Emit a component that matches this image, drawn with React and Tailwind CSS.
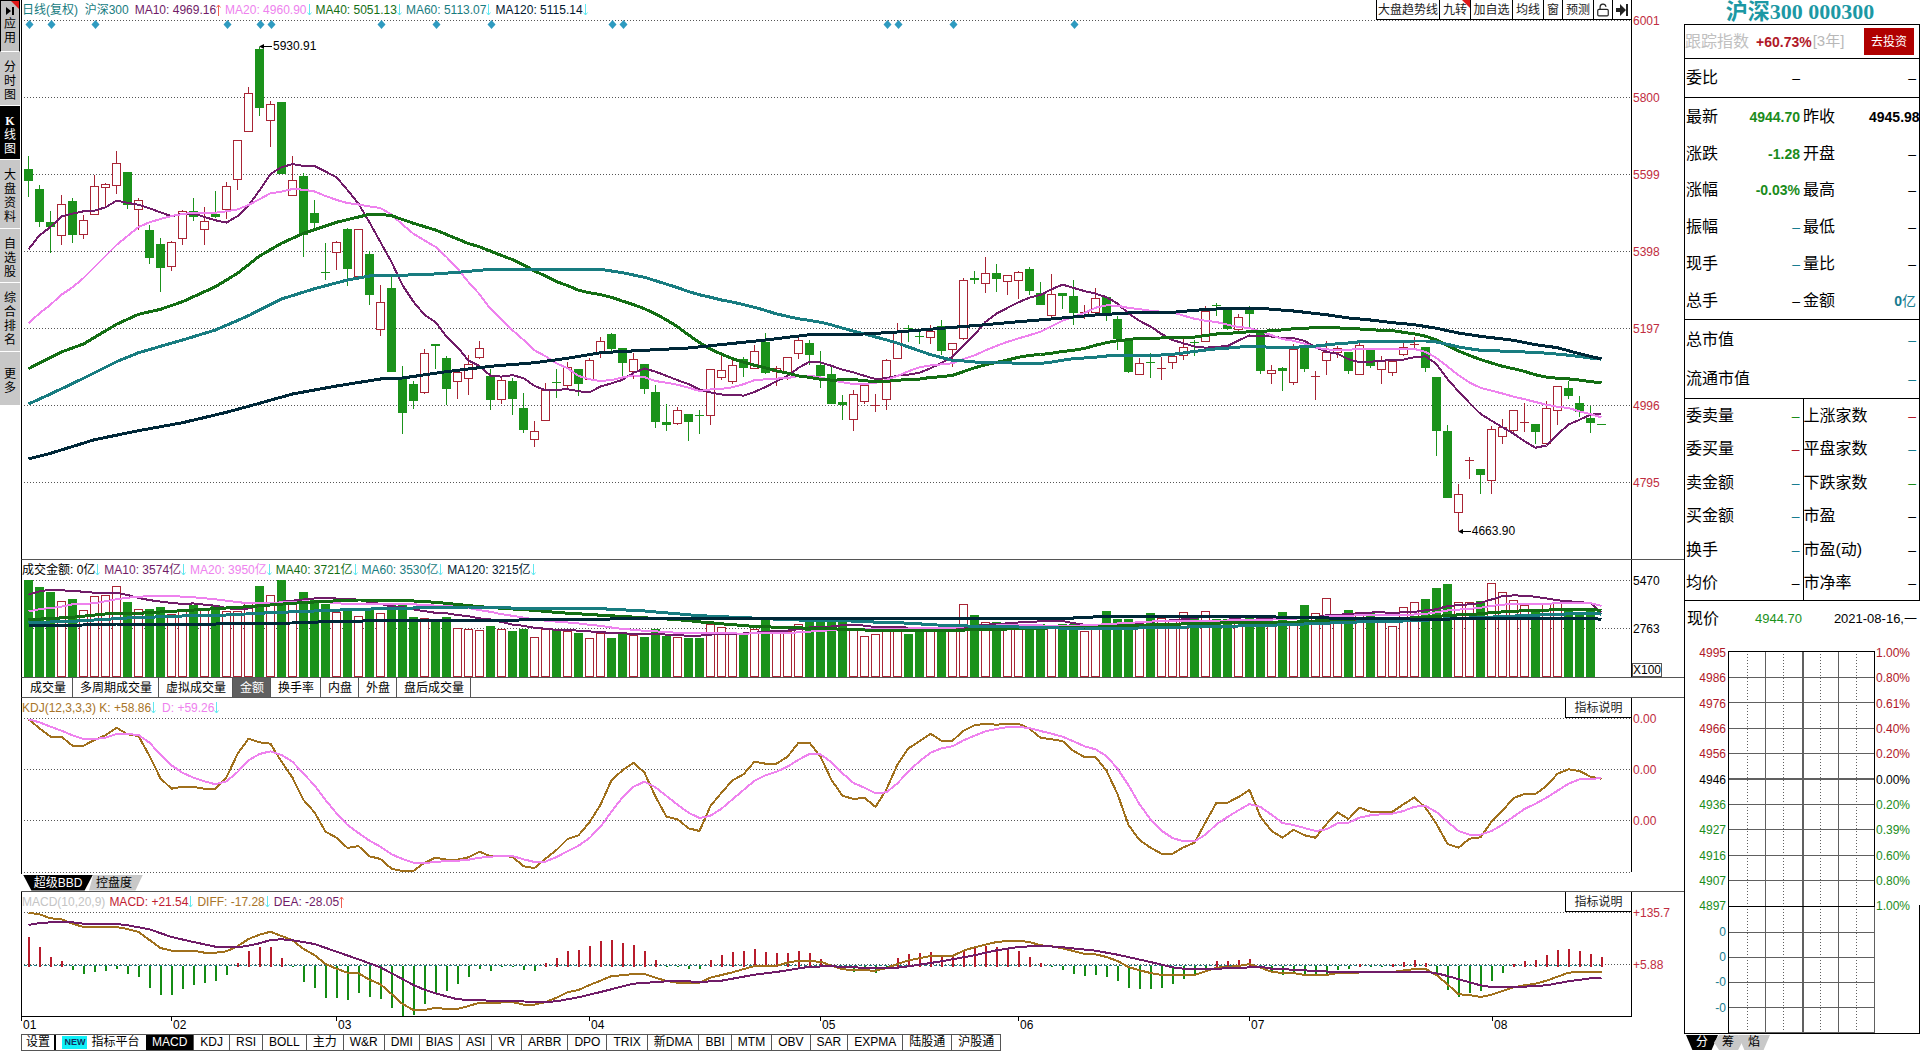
import { LockOpen } from "lucide-react";

const STEP = 11;
const cx = (i) => 6.5 + i * STEP;

// chart readings are stored in thirds of a pixel
// candle: colour, body top, body bottom, high, low
const candleBlocks = [
  {
    base: 0,
    rows: `g 508 542 468 591|g 567 665 556 681|g 666 681 632 759|r 613 704 585 735|g 603 704 595 729|r 661 701 645 716|r 559 641 525 644|r 552 560 548 620|r 490 556 453 582|g 516 616 516 626|r 601 626 593 690|g 690 773 675 792|g 732 803 714 876|r 727 797 723 812|r 634 713 630 735|g 633 650 595 663|r 664 686 621 735|g 641 650 573 655|r 559 626 546 656|r 421 536 421 570|r 280 392 261 396|g 147 323 140 347|r 313 361 303 440|g 306 521 306 521|r 541 584 468 585|g 528 705 519 771|g 639 668 600 685|g 815 818 730 840|r 727 757 722 810|g 687 806 684 858|r 688 829 688 841|g 762 884 753 914`,
  },
  {
    base: 600,
    rows: `r 307 386 255 408|g 264 515 230 515|g 535 638 498 702|g 552 602 543 627|r 460 577 447 581|g 433 437 433 507|g 474 566 468 615|r 516 544 516 597|r 493 533 465 585|r 445 472 423 478|g 529 599 507 630|r 541 596 530 612|g 543 596 534 645|g 625 689 580 699|r 694 716 663 741|r 570 659 549 659|g 547 550 507 594|r 500 556 486 570|g 507 551 507 588|r 481 536 474 540|r 424 457 411 474|g 402 447 399 455|g 444 488 444 531|r 478 514 459 537|g 492 566 492 582|g 576 665 556 684|g 667 675 612 692|r 631 668 621 675|g 642 665 642 723|g 645 648 630 702|r 508 644 508 675|r 511 530 468 540|r 496 542 480 552|g 477 503 471 531|r 454 503 435 508|g 426 518 399 523|r 505 514 498 558|r 472 520 472 540|r 421 458 414 477|g 429 464 420 495|g 495 529 453 564|g 522 612 500 612|g 606 614 585 660|r 583 656 570 693|r 556 602 550 612|r 615 618 582 636|r 481 596 477 630|r 397 473 369 473|g 384 387 375 426|g 407 411 390 432|r 394 412 375 432|g 379 453 360 465|r 430 446 430 500|r 241 415 235 421|g 235 239 213 252|r 220 248 171 279|g 219 237 192 276|r 226 242 226 285|r 217 239 213 297|g 207 272 201 285|g 279 315 246 315|r 283 344 222 351|g 279 288 279 327|g 288 339 240 375|r 336 345 315 357|r 295 335 264 348|g 291 345 291 363|g 357 416 348 450|g 423 516 423 519|r 490 521 474 521|g 486 489 459 534|r 505 508 471 540|r 468 486 465 507|r 440 466 416 480|g 426 430 420 468|r 333 422 318 426|g 315 319 309 348`,
  },
  {
    base: 720,
    rows: `g 202 267 202 270|r 232 268 223 272|g 208 221 198 260|g 276 393 276 401|r 391 400 375 432|g 384 393 381 453|r 328 425 312 435|g 315 387 315 396|r 409 412 393 480|r 336 361 303 405|r 325 335 318 354|g 336 392 336 402|r 314 402 310 405|g 330 377 330 384|r 362 388 348 432|r 364 395 360 408|r 322 343 308 348|r 313 316 291 325|g 321 383 321 396|g 411 572 411 648|g 573 773 555 773|r 763 815 732 873|r 660 663 651 717|g 687 704 687 762|r 566 721 558 762|r 562 589 537 612|r 511 569 511 580|r 546 549 489 576|g 552 575 552 612|r 505 610 483 616|r 439 511 439 555|g 444 468 423 476|g 489 517 468 530|g 534 549 498 579|g 552 555 552 555`,
  },
];

const candles = candleBlocks.flatMap(({ base, rows }) =>
  rows.split("|").map((row) => {
    const [color, ...v] = row.split(" ");
    const [top, bottom, high, low] = v.map((n) => Number(n) + base);
    return { up: color === "r", top, bottom, high, low };
  })
);

const closes = candles.map((c) => (c.up ? c.top : c.bottom));

const volumes = [
  91, 112, 126, 154, 147, 181, 139, 136, 109, 156, 178, 178, 171, 193, 178, 165, 178, 165, 184, 184, 160, 108, 136, 91,
  150, 126, 150, 162, 187, 184, 199, 180, 190, 165, 165, 200, 203, 210, 202, 235, 237, 241, 228, 238, 243, 237, 262, 237,
  238, 243, 250, 265, 250, 265, 250, 256, 262, 238, 258, 262, 264, 264, 223, 232, 250, 252, 237, 208, 245, 243, 222, 213,
  213, 212, 212, 240, 259, 253, 240, 238, 252, 240, 240, 237, 225, 163, 195, 215, 215, 220, 225, 222, 222, 235, 222, 222,
  244, 225, 183, 207, 207, 220, 190, 205, 210, 187, 205, 184, 208, 208, 212, 205, 210, 222, 186, 215, 165, 190, 145, 200,
  180, 185, 190, 205, 229, 172, 157, 147, 114, 102, 156, 156, 153, 100, 127, 151, 166, 180, 160, 160, 182, 185, 182, 381,
];

const kLine = [
  508, 535, 560, 560, 587, 587, 570, 556, 533, 553, 558, 618, 685, 716, 710, 711, 716, 716, 682, 612, 566, 577, 581, 635,
  683, 750, 787, 845, 863, 894, 888, 919, 927, 956, 963, 963, 938, 923, 929, 929, 922, 905, 919, 918, 920, 949, 954, 926,
  900, 867, 856, 817, 764, 691, 661, 638, 668, 740, 800, 808, 835, 843, 768, 728, 691, 673, 635, 641, 641, 620, 578, 578,
  620, 690, 737, 747, 743, 771, 718, 643, 595, 574, 551, 572, 572, 542, 526, 521, 524, 521, 521, 536, 563, 568, 573, 603,
  621, 621, 662, 732, 825, 870, 893, 911, 911, 892, 878, 817, 758, 758, 741, 720, 800, 843, 863, 839, 856, 863, 822, 787,
  807, 773, 785, 785, 785, 763, 742, 773, 822, 882, 893, 866, 862, 815, 782, 744, 732, 732, 708, 671, 658, 663, 680, 686,
];

const dLine = [
  508, 517, 530, 542, 556, 567, 567, 563, 552, 552, 555, 578, 614, 646, 668, 683, 694, 703, 694, 666, 631, 612, 604, 615,
  635, 671, 706, 750, 790, 825, 849, 872, 890, 913, 927, 938, 939, 936, 933, 932, 929, 923, 920, 918, 918, 928, 936, 935,
  921, 904, 887, 864, 830, 785, 742, 710, 695, 712, 738, 764, 788, 804, 797, 776, 748, 720, 692, 676, 665, 650, 629, 612,
  613, 637, 670, 699, 713, 730, 727, 700, 664, 634, 608, 595, 589, 571, 557, 544, 537, 531, 531, 534, 543, 551, 560, 574,
  589, 598, 618, 656, 706, 763, 808, 842, 864, 874, 874, 854, 823, 801, 781, 762, 771, 794, 819, 825, 834, 843, 838, 820,
  818, 803, 796, 793, 791, 783, 770, 768, 786, 815, 843, 854, 854, 843, 824, 800, 777, 761, 743, 722, 701, 688, 686, 685,
];

const macdBars = [
  231, 262, 291, 303, 329, 341, 336, 333, 326, 342, 350, 384, 405, 405, 387, 375, 369, 362, 345, 310, 274, 262, 262, 294,
  322, 366, 384, 413, 413, 419, 399, 411, 416, 443, 467, 465, 431, 402, 393, 372, 350, 326, 332, 318, 318, 329, 332, 309,
  294, 274, 270, 258, 243, 240, 249, 255, 274, 300, 318, 321, 326, 326, 300, 285, 276, 273, 267, 276, 279, 279, 273, 279,
  298, 322, 329, 336, 332, 338, 325, 294, 282, 279, 276, 290, 290, 272, 262, 257, 262, 268, 273, 291, 309, 318, 330, 342,
  348, 346, 351, 363, 384, 387, 387, 384, 372, 357, 345, 325, 303, 303, 301, 297, 325, 338, 345, 340, 345, 345, 345, 330,
  327, 312, 318, 318, 312, 306, 300, 309, 338, 390, 410, 399, 393, 363, 339, 312, 303, 300, 285, 270, 267, 273, 282, 291,
];

// "index:value" pairs
const pairs = (text) => text.split(" ").map((p) => p.split(":").map(Number));
const series = (values) => values.map((v, i) => [i, v]);

// moving average, with the part before the first full window given by hand
const average = (values, n, lead) => [
  ...pairs(lead),
  ...values
    .map((_, i) => [i, values.slice(i - n + 1, i + 1).reduce((a, b) => a + b, 0) / n])
    .slice(n - 1),
];

const MA10 = "#701c68";
const MA20 = "#ee82ee";
const MA40 = "#146e14";
const MA60 = "#187c80";
const MA120 = "#002838";
const GREEN = "#1b921b";
const RED = "#a82434";
const GOLD = "#a0701c";

const priceLines = [
  { color: MA10, width: 2, points: average(closes, 10, "0:748 1:706 2:681 3:649 4:641 5:634 6:632 7:622 8:602") },
  {
    color: MA20,
    width: 2,
    points: average(closes, 20, "0:970 1:940 2:914 3:884 4:862 5:834 6:801 7:768 8:735 9:708 10:681 11:667 12:657 13:648 14:642 15:638 16:638 17:638 18:634"),
  },
  {
    color: MA40,
    width: 3,
    points: average(closes, 40, "0:1106 3:1056 5:1032 8:973 10:943 12:928 14:905 17:860 19:820 21:768 23:730 25:700 28:667 31:643 32:643 33:647 35:670 37:690"),
  },
  {
    color: MA60,
    width: 3,
    points: average(closes, 60, "0:1212 2:1182 5:1135 8:1085 10:1058 14:1020 17:990 20:947 23:897 26:866 29:840 31:828 33:826 36:824 39:817 42:808 52:808 54:818 56:832"),
  },
  {
    color: MA120,
    width: 3,
    points: pairs("0:1377 2:1360 6:1319 10:1292 14:1268 18:1237 21:1210 24:1182 28:1158 32:1137 34:1134 38:1115 42:1099 46:1088 49:1075 52:1058 56:1051 60:1044 62:1037 67:1020 71:1004 76:1002 79:996 83:985 87:974 90:965 93:957 97:945 101:937 104:937 106:931 109:925 112:925 115:933 118:944 120:954 122:960 124:968 126:974 128:985 130:999 132:1009 135:1021 137:1034 139:1043 141:1061 143:1077"),
  },
];

const volumeLines = [
  { color: MA10, width: 2, points: average(volumes, 10, "0:134 1:124 2:119 3:121 4:123 5:125 6:128 7:128 8:128") },
  { color: MA20, width: 2, points: average(volumes, 20, "0:184 1:178 3:170 4:163 6:160 8:148 9:143 11:138 13:138 15:142 17:148") },
  { color: MA40, width: 3, points: average(volumes, 40, "0:209 4:202 7:192 10:190 14:182 18:174 20:170 24:160 27:154 30:150 34:151 37:157") },
  { color: MA60, width: 3, points: average(volumes, 60, "0:218 4:214 9:204 14:198 18:195 22:188 26:183 30:178 35:174 40:171 45:175 52:176 56:183") },
  { color: MA120, width: 3, points: pairs("0:226 4:226 8:222 17:222 20:220 24:219 28:214 36:211 44:211 46:208 60:206 72:205 95:204 98:199 112:199 114:202 120:205 128:208 132:205 142:205 143:208") },
];

const kdjLines = [
  { color: GOLD, width: 2, points: series(kLine) },
  { color: MA20, width: 2, points: series(dLine) },
];

const macdLines = [
  {
    color: GOLD,
    width: 2,
    points: pairs("0:158 1:163 2:175 3:178 4:191 5:201 8:201 9:207 10:216 11:240 12:264 13:272 15:272 16:278 17:278 18:274 19:259 20:237 21:224 22:215 23:228 24:241 25:267 26:285 27:312 28:326 29:338 30:340 31:359 32:373 33:402 34:432 35:450 36:450 37:443 38:447 39:447 40:438 41:428 42:429 44:426 45:434 46:434 47:426 48:413 49:397 50:390 51:375 52:362 53:348 54:346 55:342 56:342 57:353 58:363 59:368 61:368 62:353 64:337 66:318 68:317 69:308 70:302 72:305 73:317 74:328 75:330 77:332 78:324 79:312 80:301 81:295 82:288 84:288 85:272 86:262 87:254 88:246 89:243 90:242 91:246 92:256 93:259 94:265 95:273 96:282 97:283 98:291 99:303 100:321 101:331 102:339 103:345 106:345 107:334 108:323 110:318 111:312 112:323 113:335 114:339 115:339 116:345 118:345 119:339 123:336 124:336 126:327 127:327 128:345 129:373 130:403 131:405 132:411 133:404 134:393 135:382 136:376 137:371 138:362 139:350 140:338 141:336 143:336"),
  },
  {
    color: MA10,
    width: 2,
    points: pairs("0:195 1:189 3:185 4:187 5:191 8:192 9:196 11:208 13:231 15:246 17:260 19:262 20:257 21:250 22:240 23:238 24:241 26:252 28:275 30:298 32:322 33:340 34:357 35:375 36:389 37:400 39:418 42:422 47:426 48:424 50:412 52:396 55:371 58:364 59:362 61:366 63:362 66:344 68:336 71:320 73:319 75:322 77:325 79:323 80:319 83:304 86:286 88:271 90:261 92:257 94:262 97:272 99:284 102:306 104:322 105:326 108:326 110:324 112:320 113:326 115:329 117:333 119:336 125:335 127:335 128:340 129:348 131:367 132:376 133:381 135:382 138:376 140:364 142:355 143:353"),
  },
];

const events = [0, 2, 6, 18, 21, 22, 32, 37, 42, 53, 54, 78, 79, 84, 95];

function Lines({ lines }) {
  return lines.map((line, i) => (
    <polyline
      key={i}
      fill="none"
      stroke={line.color}
      strokeWidth={line.width}
      strokeLinejoin="round"
      points={line.points.map(([x, y]) => `${cx(x)},${(y / 3).toFixed(1)}`).join(" ")}
    />
  ));
}

function GridLines({ rows }) {
  return rows.map((y) => <line key={y} x1="2" x2="1609" y1={y} y2={y} stroke="#555" strokeDasharray="1 2" />);
}

function Bar({ x, top, bottom, up }) {
  const y = Math.round(top / 3);
  const h = Math.max(1, Math.round(bottom / 3) - y);
  if (up && h > 1) {
    return <rect x={x - 4} y={y + 0.5} width="8" height={h} fill="#fff" stroke={RED} />;
  }
  return <rect x={x - 4.5} y={y} width="9" height={h} fill={up ? RED : GREEN} />;
}

function PriceChart() {
  return (
    <svg className="block w-full h-[539px]" viewBox="0 20 1609 539" preserveAspectRatio="none" shapeRendering="crispEdges">
      <GridLines rows={[20.5, 97.5, 174.5, 251.5, 328.5, 405.5, 482.5]} />
      {candles.map((c, i) => (
        <g key={i}>
          <line x1={cx(i)} x2={cx(i)} y1={Math.round(c.high / 3)} y2={Math.round(c.low / 3)} stroke={c.up ? RED : GREEN} />
          <Bar x={cx(i)} top={c.top} bottom={c.bottom} up={c.up} />
        </g>
      ))}
      <Lines lines={priceLines} />
      {events.map((i) => (
        <path key={i} d={`M${cx(i) + 1} 20l4 4.5l-4 4.5l-4 -4.5z`} fill="#2f9bc0" shapeRendering="auto" />
      ))}
      <path d="M239 46.5h11M1437 531.5h12" stroke="#000" />
      <path d="M237 46.5l5 -2.5v5zM1436 531.5l5 -2.5v5z" fill="#000" shapeRendering="auto" />
    </svg>
  );
}

function VolumeChart() {
  return (
    <svg className="block w-full h-[97px]" viewBox="0 30 1609 97" preserveAspectRatio="none" shapeRendering="crispEdges">
      <GridLines rows={[30.5, 78.5]} />
      {volumes.slice(0, -1).map((v, i) => (
        <Bar key={i} x={cx(i)} top={v} bottom={candles[i].up ? 378 : 381} up={candles[i].up} />
      ))}
      <Lines lines={volumeLines} />
    </svg>
  );
}

function KdjChart() {
  return (
    <svg className="block w-full h-[156px]" viewBox="0 168 1609 156" preserveAspectRatio="none" shapeRendering="crispEdges">
      <GridLines rows={[168.5, 219.5, 270.5, 322.5]} />
      <Lines lines={kdjLines} />
    </svg>
  );
}

function MacdChart() {
  return (
    <svg className="block w-full h-[104px]" viewBox="0 52 1609 104" preserveAspectRatio="none" shapeRendering="crispEdges">
      <GridLines rows={[52.5, 104.5]} />
      <line x1="2" x2="1580" y1="105.5" y2="105.5" stroke="#187c80" strokeDasharray="3 2" />
      {macdBars.map((v, i) => {
        const up = v < 318;
        return <rect key={i} x={cx(i) - 1} y={up ? v / 3 : 106} width="2" height={Math.max(1, up ? 106.5 - v / 3 : v / 3 - 106)} fill={up ? "#b81c2c" : "#148c14"} />;
      })}
      <Lines lines={macdLines} />
    </svg>
  );
}

function Arrow({ up }) {
  return (
    <svg className={up ? "w-[5px] h-3 rotate-180" : "w-[5px] h-3"} viewBox="0 0 5 12" fill="none" stroke={up ? "#f06050" : "#60e8f0"}>
      <path d="M2.5 0v11M0.5 8.5l2 2.5l2 -2.5" />
    </svg>
  );
}

function Legend({ items }) {
  return (
    <div className="flex h-5 items-center gap-1 whitespace-nowrap">
      {items.map(([text, color, arrow]) => (
        <span key={text} className={`flex items-center ${color}`}>
          {text}
          {arrow && <Arrow up={arrow === "up"} />}
        </span>
      ))}
    </div>
  );
}

function HelpButton() {
  return <button className="absolute top-0 right-0 h-5 w-[66px] border-l border-b border-black bg-white text-[#222]">指标说明</button>;
}

const navItems = [
  ["应用", "h-[52px] bg-[#c0c0c0] border border-black text-black"],
  ["分时图", "h-[54px] pt-1 bg-[#c8c8c8] text-black"],
  ["K线图", "h-[54px] pt-1 bg-black text-white"],
  ["大盘资料", "h-[69px] pt-1 bg-[#c8c8c8] text-black"],
  ["自选股", "h-[54px] pt-1 bg-[#c8c8c8] text-black"],
  ["综合排名", "h-[69px] pt-1 bg-[#c8c8c8] text-black"],
  ["更多", "h-[54px] pt-1 bg-[#c8c8c8] text-black"],
];

function SideNav() {
  return (
    <nav className="w-[21px] shrink-0">
      {navItems.map(([label, look], i) => (
        <button key={label} className={`relative flex w-5 flex-col items-center justify-center border-b border-b-white leading-[14px] ${look}`}>
          {i === 0 && (
            <>
              <svg className="mb-0.5 h-2 w-2" viewBox="0 0 8 8"><path d="M0 0l5 4l-5 4zM6 0h2v8h-2z" /></svg>
              <svg className="absolute top-0 right-0 h-2 w-2" viewBox="0 0 8 8"><path d="M0 0h8v8z" fill="#e01818" /></svg>
            </>
          )}
          {[...label].map((ch) => (
            <span key={ch} className={ch === "K" ? "font-['Liberation_Serif',serif] font-bold" : ""}>{ch}</span>
          ))}
        </button>
      ))}
    </nav>
  );
}

function Toolbar() {
  const tool = "flex h-5 items-center justify-center border-r border-b border-black bg-white text-[#222]";
  return (
    <div className="absolute top-0 right-0 flex h-5 whitespace-nowrap">
      <button className={`${tool} w-16 border-l`}>大盘趋势线</button>
      <button className={`${tool} relative w-[31px]`}>
        九转
        <svg className="absolute top-0 right-0 h-2 w-2" viewBox="0 0 8 8"><path d="M0 0h8v8z" fill="#e01818" /></svg>
      </button>
      <button className={`${tool} w-[42px]`}>加自选</button>
      <button className={`${tool} w-[31px]`}>均线</button>
      <button className={`${tool} w-[19px]`}>窗</button>
      <button className={`${tool} w-[31px]`}>预测</button>
      <button className={`${tool} w-[19px]`} aria-label="锁定"><LockOpen className="h-3.5 w-3.5" strokeWidth={2} /></button>
      <button className={`${tool} w-[18px] border-r-0`} aria-label="收起">
        <svg className="h-3 w-3" viewBox="0 0 12 12" fill="#222"><path d="M0 4h4v-4l6 6l-6 6v-4h-4zM10 0h2v12h-2z" /></svg>
      </button>
    </div>
  );
}

function TabRow({ tabs, active, activeClass, padding }) {
  return tabs.map((tab) => (
    <button key={tab} className={`border-r border-[#555] ${padding} ${tab === active ? activeClass : ""}`}>{tab}</button>
  ));
}

const volumeTabs = ["成交量", "多周期成交量", "虚拟成交量", "金额", "换手率", "内盘", "外盘", "盘后成交量"];
const indicatorTabs = ["MACD", "KDJ", "RSI", "BOLL", "主力", "W&R", "DMI", "BIAS", "ASI", "VR", "ARBR", "DPO", "TRIX", "新DMA", "BBI", "MTM", "OBV", "SAR", "EXPMA", "陆股通", "沪股通"];

function Charts() {
  const axis = "w-[53px] shrink-0 border-l border-black pl-px leading-4 text-[#c02c40]";
  return (
    <main className="min-w-0 flex-1">
      <section className="flex border-b border-l border-b-[#555] border-l-black">
        <div className="relative min-w-0 flex-1">
          <Legend
            items={[
              ["日线(复权)\u00a0\u00a0沪深300", "text-[#187c80]"],
              ["MA10: 4969.16", "ml-0.5 text-[#701c68]", "up"],
              ["MA20: 4960.90", "text-[#ee82ee]", "down"],
              ["MA40: 5051.13", "text-[#146e14]", "down"],
              ["MA60: 5113.07", "text-[#187c80]", "down"],
              ["MA120: 5115.14", "text-[#001830]", "down"],
            ]}
          />
          <PriceChart />
          <Toolbar />
          <span className="absolute top-[38px] left-[15.6%] leading-4">5930.91</span>
          <span className="absolute top-[523px] left-[90.1%] leading-4">4663.90</span>
        </div>
        <div className={`${axis} pt-[13px]`}>
          {[6001, 5800, 5599, 5398, 5197, 4996, 4795].map((p) => (
            <div key={p} className="h-[77px]">{p}</div>
          ))}
        </div>
      </section>

      <section className="flex border-b border-l border-b-[#555] border-l-black">
        <div className="min-w-0 flex-1">
          <Legend
            items={[
              ["成交金额: 0亿", "text-black", "down"],
              ["MA10: 3574亿", "text-[#701c68]", "down"],
              ["MA20: 3950亿", "text-[#ee82ee]", "down"],
              ["MA40: 3721亿", "text-[#146e14]", "down"],
              ["MA60: 3530亿", "text-[#187c80]", "down"],
              ["MA120: 3215亿", "text-[#001830]", "down"],
            ]}
          />
          <VolumeChart />
        </div>
        <div className="flex w-[53px] shrink-0 flex-col border-l border-black pt-[13px] leading-4">
          <div className="h-12 pl-px">5470</div>
          <div className="pl-px">2763</div>
          <div className="mt-auto w-[30px] border border-[#555] text-center leading-3">X100</div>
        </div>
      </section>

      <div className="flex h-5 border-b border-l border-b-[#555] border-l-black pl-px">
        <TabRow tabs={volumeTabs} active="金额" activeClass="bg-[#606060] text-white" padding="pl-[7px] pr-1.5" />
      </div>

      <section className="flex h-[176px] border-l border-black">
        <div className="relative min-w-0 flex-1">
          <Legend
            items={[
              ["KDJ(12,3,3,3) K: +58.86", "text-[#a87428]", "down"],
              ["D: +59.26", "ml-0.5 text-[#ee82ee]", "down"],
            ]}
          />
          <KdjChart />
          <HelpButton />
        </div>
        <div className={`${axis} h-[174px] pt-[13px]`}>
          {[1, 2, 3].map((n) => (
            <div key={n} className="h-[51px]">0.00</div>
          ))}
        </div>
      </section>

      <div className="flex h-[18px] items-center border-b border-[#555] pl-0.5">
        <button className="h-4 w-[70px] bg-black text-white leading-4 [clip-path:polygon(0_0,100%_0,88%_100%,12%_100%)]">超级BBD</button>
        <button className="-ml-1 h-4 w-[54px] bg-[#c8c8c8] pr-1 leading-4 [clip-path:polygon(8%_0,100%_0,86%_100%,0_100%)]">控盘度</button>
      </div>

      <section className="flex border-l border-black">
        <div className="relative min-w-0 flex-1 border-b border-black">
          <Legend
            items={[
              ["MACD(10,20,9)", "text-[#c4c4c4]"],
              ["MACD: +21.54", "text-[#c01c30]", "down"],
              ["DIFF: -17.28", "text-[#a87428]", "down"],
              ["DEA: -28.05", "text-[#701c68]", "up"],
            ]}
          />
          <MacdChart />
          <HelpButton />
        </div>
        <div className={`${axis} pt-[13px]`}>
          <div className="h-[52px]">+135.7</div>
          <div>+5.88</div>
        </div>
      </section>

      <div className="mr-[53px] grid h-[17px] grid-cols-[150fr_165fr_253fr_231fr_198fr_231fr_243fr_139fr] leading-4">
        {["01", "02", "03", "04", "05", "06", "07", "08"].map((m) => (
          <div key={m} className="flex gap-px"><span className="h-1 w-px bg-black" />{m}</div>
        ))}
      </div>

      <div className="flex h-[17px] whitespace-nowrap border-y border-l border-[#555] w-fit leading-[15px]">
        <button className="w-[34px] border-r-2 border-black text-center">设置</button>
        <button className="flex w-[90px] items-center justify-center gap-1">
          <span className="bg-[#10f0f8] px-0.5 text-[9px] leading-[13px] font-bold text-[#103060]">NEW</span>
          指标平台
        </button>
        <TabRow tabs={indicatorTabs} active="MACD" activeClass="bg-black text-white" padding="px-1.5" />
      </div>
    </main>
  );
}

const tone = { k: "text-black", g: "text-[#1b8c1b]", r: "text-[#b01828]", b: "text-[#187c90]" };

function QuoteTable({ rows, className, split }) {
  return (
    <table className={`w-full table-fixed border-t border-r border-black text-base leading-5 ${className}`}>
      <tbody>
        {rows.map(([label, value, color, label2, value2, color2]) => (
          <tr key={label}>
            <th scope="row" className="w-[52px] p-0 pl-px text-left font-normal whitespace-nowrap">{label}</th>
            <td className={`w-[66px] p-0 pr-[3px] text-right text-sm font-bold ${tone[color]}`}>
              {value === "–" ? <span className="font-normal">–</span> : value}
            </td>
            <th scope="row" className={`w-[66px] p-0 text-left font-normal whitespace-nowrap ${split ? "border-l border-black" : ""}`}>{label2}</th>
            <td className={`p-0 pr-[3px] text-right text-sm ${tone[color2]}`}>{value2}</td>
          </tr>
        ))}
      </tbody>
    </table>
  );
}

const gridRows = [
  ["4995", "1.00%", "r"],
  ["4986", "0.80%", "r"],
  ["4976", "0.61%", "r"],
  ["4966", "0.40%", "r"],
  ["4956", "0.20%", "r"],
  ["4946", "0.00%", "k"],
  ["4936", "0.20%", "g"],
  ["4927", "0.39%", "g"],
  ["4916", "0.60%", "g"],
  ["4907", "0.80%", "g"],
  ["4897", "1.00%", "g"],
  ["0", "", "b"],
  ["0", "", "b"],
  ["-0", "", "b"],
  ["-0", "", "b"],
];

function MinuteGrid() {
  return (
    <svg className="mt-[7px] block h-[382px] w-[147px] shrink-0" viewBox="0 0 147 382" shapeRendering="crispEdges" stroke="#606060">
      {[26, 51, 77, 102, 153, 178, 204, 229, 281, 306, 331, 356].map((y) => (
        <line key={y} x1="0" x2="147" y1={y + 0.5} y2={y + 0.5} />
      ))}
      {[19.5, 55.5, 92.5, 128.5].map((x) => (
        <line key={x} x1={x} x2={x} y1="0" y2="382" strokeDasharray="1 2" />
      ))}
      <path d="M37.5 0v382M110.5 0v382M146.5 0v382M0 381.5h147" />
      <path d="M75 0v382M0 128h147" strokeWidth="2" />
      <path d="M0 0.5h147M0.5 0v382M146.5 0v255M0 255.5h147" stroke="#000" />
    </svg>
  );
}

function QuotePanel() {
  return (
    <aside className="w-[236px] shrink-0">
      <h1 className="h-6 pr-1 text-center font-['Liberation_Serif','Noto_Sans_CJK_SC',serif] text-[22px] leading-6 font-bold text-[#1c98a4]">沪深300 000300</h1>
      <div className="border-b border-l border-black">
        <div className="flex h-[34px] items-center border-t border-r border-black text-base">
          <span className="text-[#c0c0c0]">跟踪指数</span>
          <span className="ml-[7px] text-sm font-bold text-[#b01828]">+60.73%</span>
          <span className="ml-px text-[15px] text-[#b8b8b8]">[3年]</span>
          <button className="mr-[5px] ml-auto h-[27px] w-[50px] bg-[#b00000] text-xs text-white">去投资</button>
        </div>
        <QuoteTable className="h-[39px]" rows={[["委比", "–", "k", "", "–", "k"]]} />
        <QuoteTable
          className="h-[222px]"
          rows={[
            ["最新", "4944.70", "g", "昨收", <b>4945.98</b>, "k"],
            ["涨跌", "-1.28", "g", "开盘", "–", "k"],
            ["涨幅", "-0.03%", "g", "最高", "–", "k"],
            ["振幅", "–", "b", "最低", "–", "k"],
            ["现手", "–", "b", "量比", "–", "k"],
            ["总手", "–", "k", "金额", <><b>0</b>亿</>, "b"],
          ]}
        />
        <QuoteTable
          className="h-[79px]"
          rows={[
            ["总市值", "", "k", "", "–", "b"],
            ["流通市值", "", "k", "", "–", "b"],
          ]}
        />
        <QuoteTable
          className="h-[202px]"
          split
          rows={[
            ["委卖量", "–", "g", "上涨家数", "–", "r"],
            ["委买量", "–", "r", "平盘家数", "–", "b"],
            ["卖金额", "–", "b", "下跌家数", "–", "g"],
            ["买金额", "–", "b", "市盈", "–", "k"],
            ["换手", "–", "b", "市盈(动)", "–", "k"],
            ["均价", "–", "k", "市净率", "–", "k"],
          ]}
        />
        <div className="flex h-[37px] items-center border-t border-black pl-0.5 text-[13px]">
          <span className="text-base">现价</span>
          <span className="ml-9 text-[#1b921b]">4944.70</span>
          <span className="mr-[3px] ml-auto">2021-08-16,一</span>
        </div>
        <div className="flex pt-[7px] leading-4">
          <div className="mt-px flex h-[371px] w-[43px] flex-col justify-between pr-0.5 text-right">
            {gridRows.map(([price, , color], i) => (
              <span key={i} className={tone[color]}>{price}</span>
            ))}
          </div>
          <MinuteGrid />
          <div className="mt-px flex h-[371px] flex-1 flex-col justify-between pl-px">
            {gridRows.map(([, pct, color], i) => (
              <span key={i} className={`h-4 ${tone[color]}`}>{pct}</span>
            ))}
          </div>
          <span className="h-[128px] w-px self-end bg-black" />
        </div>
      </div>
      <div className="flex items-center pt-px pl-0.5 leading-[15px]">
        <button className="h-[15px] w-8 bg-black text-white [clip-path:polygon(0_0,100%_0,80%_100%,20%_100%)]">分</button>
        <button className="-ml-1 h-[15px] w-7 bg-[#c8c8c8] [clip-path:polygon(18%_0,86%_0,100%_50%,86%_100%,18%_100%,0_50%)]">筹</button>
        <button className="-ml-1 h-[15px] w-8 bg-[#c8c8c8] [clip-path:polygon(0_0,100%_0,80%_100%,20%_100%)]">焰</button>
      </div>
    </aside>
  );
}

export default function App() {
  return (
    <div className="flex min-h-screen bg-white font-['Liberation_Sans','Noto_Sans_CJK_SC',sans-serif] text-xs text-black">
      <SideNav />
      <Charts />
      <QuotePanel />
    </div>
  );
}
